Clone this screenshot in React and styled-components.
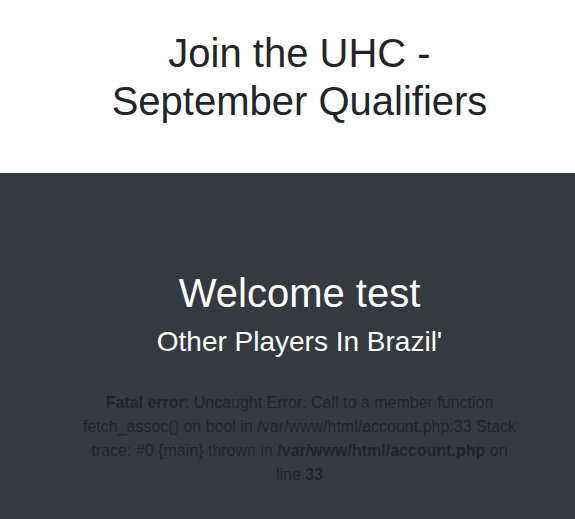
import React from 'react'
import styled, { createGlobalStyle } from 'styled-components'

const GlobalStyle = createGlobalStyle`
  html, body {
    margin: 0;
    padding: 0;
    background: #fff;
    font-family: "Liberation Sans", Arial, Helvetica, sans-serif;
    color: #212529;
  }
  * { box-sizing: border-box; }
`

export default function App () {
  return (
    <>
      <GlobalStyle />
      <Header>
        <Title>Join the UHC -<br />September Qualifiers</Title>
      </Header>
      <Main>
        <Welcome>Welcome test</Welcome>
        <Subtitle>Other Players In Brazil'</Subtitle>
        <ErrorText>
          <b>Fatal error</b>: Uncaught Error: Call to a member function fetch_assoc() on bool in /var/www/html/account.php:33 Stack trace: #0 {'{main}'} thrown in <b>/var/www/html/account.php</b> on line <b>33</b>
        </ErrorText>
      </Main>
    </>
  )
}

// the page content sits a little right of the window centre
const Header = styled.header`
  padding: 29px 15px 48px 39px;
  text-align: center;
  background: #fff;
`

const Title = styled.h1`
  margin: 0;
  font-size: 40px;
  font-weight: 400;
  line-height: 48px;
  color: #212529;
`

const Main = styled.main`
  background: #343a40;
  padding: 96px 15px 20px 39px;
  text-align: center;
  min-height: 346px;
`

const Welcome = styled.h1`
  margin: 0 0 8px;
  font-size: 40px;
  font-weight: 400;
  line-height: 48px;
  color: #fff;
`

const Subtitle = styled.h3`
  margin: 0;
  font-size: 28px;
  font-weight: 400;
  line-height: 33.6px;
  color: #fff;
`

const ErrorText = styled.div`
  max-width: 440px;
  margin: 32px auto 0;
  font-size: 16px;
  line-height: 24px;
  color: #212529;
`
